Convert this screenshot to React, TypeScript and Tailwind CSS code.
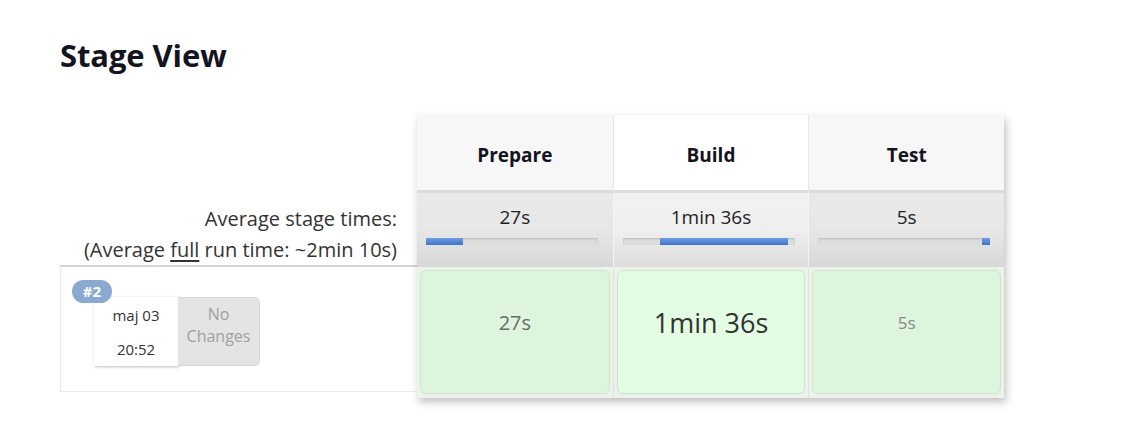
import React from "react";

interface Stage {
  name: string;
  avg: string;
  barStart: number;
  barEnd: number;
  run: string;
  runClass: string;
  highlight?: boolean;
}

const STAGES: Stage[] = [
  { name: "Prepare", avg: "27s", barStart: 0, barEnd: 37, run: "27s", runClass: "text-[20px] text-[#6a6a6a]" },
  { name: "Build", avg: "1min 36s", barStart: 37, barEnd: 165, run: "1min 36s", runClass: "text-[27px] text-[#333333]", highlight: true },
  { name: "Test", avg: "5s", barStart: 164, barEnd: 172, run: "5s", runClass: "text-[17px] text-[#8a8a8a]" },
];

function ProgressBar({ start, end }: { start: number; end: number }) {
  return (
    <div className="relative ml-[9px] h-[7px] w-[172px] bg-[#dcdcdc] shadow-[inset_0_1px_2px_rgba(0,0,0,0.15)]">
      <div
        className="absolute top-0 h-[7px] bg-gradient-to-b from-[#6f9be0] to-[#3f74cc]"
        style={{ left: start, width: end - start }}
      />
    </div>
  );
}

export default function App() {
  return (
    <div className="w-[1147px] h-[430px] bg-white pl-[60px] pt-[35px] font-['Open_Sans',sans-serif] text-[#1a1a1a]">
      {/* Title */}
      <h2 className="text-[31px] font-bold leading-[40px] text-[#14141f] tracking-[-0.1px]">Stage View</h2>

      <div className="flex mt-[40px]">
        {/* Left column */}
        <div className="w-[357px] flex flex-col">
          <div className="h-[83px]" />
          <div className="h-[69px] flex flex-col items-end justify-center pr-[20px] pt-[4px] text-[20px] leading-[31px] text-[#333333] border-b-2 border-[#d6d6d6] bg-white">
            <span>Average stage times:</span>
            <span>
              (Average <span className="underline underline-offset-[3px]">full</span> run time: ~2min 10s)
            </span>
          </div>
          <div className="relative h-[125px] border-l border-b border-[#e8e8e8]">
            <div className="absolute left-[11px] top-[13px] z-10 h-[23px] w-[40px] rounded-full bg-[#8aa9d0] flex items-center justify-center text-[15px] font-bold text-white">
              #2
            </div>
            <div className="absolute left-[33px] top-[30px] flex">
              <div className="h-[69px] w-[84px] bg-white shadow-[1px_1px_3px_rgba(0,0,0,0.25)] flex flex-col items-center justify-center gap-[10px] text-[15px] leading-[24px] text-[#333333]">
                <span>maj 03</span>
                <span>20:52</span>
              </div>
              <div className="h-[69px] w-[82px] rounded-r-[6px] border border-[#d6d6d6] border-l-0 bg-[#e4e4e4] flex flex-col items-center pt-[5px] text-[16px] leading-[22px] text-[#a0a0a0]">
                <span>No</span>
                <span>Changes</span>
              </div>
            </div>
          </div>
        </div>

        {/* Stage table */}
        <div className="w-[587px] shadow-[2px_4px_8px_rgba(0,0,0,0.25)] grid grid-cols-3">
          {STAGES.map((s, i) => (
            <div
              key={s.name}
              className={`h-[75px] flex items-center justify-center pt-[5px] text-[19px] font-bold text-[#14141f] ${
                s.highlight ? "bg-white" : "bg-[#f7f7f7]"
              } ${i > 0 ? "border-l border-[#e6e6e6]" : ""}`}
            >
              {s.name}
            </div>
          ))}
          {STAGES.map((s, i) => (
            <div
              key={s.name + "-avg"}
              className={`h-[77px] border-t-[3px] border-[#dcdcdc] pt-[12px] flex flex-col ${
                s.highlight
                  ? "bg-gradient-to-b from-[#f1f1f1] via-[#efefef] to-[#dddddd]"
                  : "bg-gradient-to-b from-[#e9e9e9] via-[#e7e7e7] to-[#d7d7d7]"
              } ${i > 0 ? "border-l border-l-[#f4f4f4]" : ""}`}
            >
              <span className="text-center text-[19px] leading-[24px] text-[#222222]">{s.avg}</span>
              <div className="mt-[9px]">
                <ProgressBar start={s.barStart} end={s.barEnd} />
              </div>
            </div>
          ))}
          {STAGES.map((s, i) => (
            <div
              key={s.name + "-run"}
              className={`h-[131px] bg-[#eaf2ea] p-[3px] ${i > 0 ? "border-l border-[#e2e2e2]" : ""}`}
            >
              <div
                className={`h-[124px] rounded-[6px] border border-[#cfe3cf] flex items-center justify-center pb-[18px] ${
                  s.highlight ? "bg-[#e3fde3]" : "bg-[#dcf5dc]"
                } ${s.runClass}`}
              >
                {s.run}
              </div>
            </div>
          ))}
        </div>
      </div>
    </div>
  );
}
